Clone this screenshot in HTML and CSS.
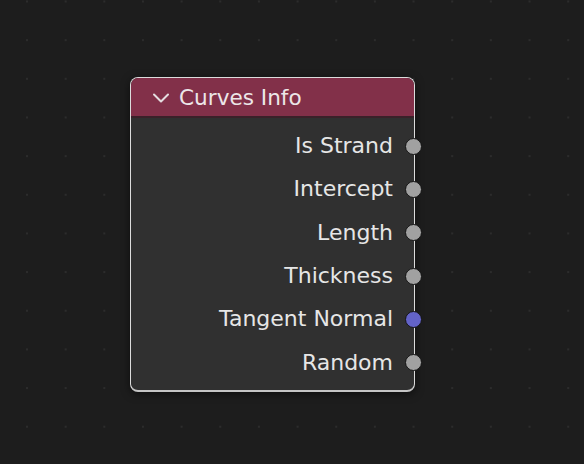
FILE: index.html
```html
<!DOCTYPE html>
<html>
<head>
<meta charset="utf-8">
<link rel="stylesheet" href="styles.css">
</head>
<body>
<div class="canvas">
  <div class="node">
    <div class="node-header">
      <svg class="chevron" width="18" height="12" viewBox="0 0 18 12"><polyline points="2,2.5 9,9.5 16,2.5" fill="none" stroke="#e4dde0" stroke-width="2" stroke-linecap="round" stroke-linejoin="round"/></svg>
      <span class="title">Curves Info</span>
    </div>
    <div class="node-body">
      <div class="row"><span>Is Strand</span><i class="socket"></i></div>
      <div class="row"><span>Intercept</span><i class="socket"></i></div>
      <div class="row"><span>Length</span><i class="socket"></i></div>
      <div class="row"><span>Thickness</span><i class="socket"></i></div>
      <div class="row"><span>Tangent Normal</span><i class="socket vector"></i></div>
      <div class="row"><span>Random</span><i class="socket"></i></div>
    </div>
  </div>
</div>
</body>
</html>
```
FILE: styles.css
```css
html, body {
  margin: 0;
  padding: 0;
}
body {
  width: 584px;
  height: 464px;
  overflow: hidden;
  background: #1d1d1d;
  font-family: "DejaVu Sans", sans-serif;
}
.canvas {
  position: relative;
  width: 584px;
  height: 464px;
  background-color: #1d1d1d;
  background-image:
    linear-gradient(to bottom, transparent 2px, #1d1d1d 2px),
    linear-gradient(to right, #2c2c2c 2px, transparent 2px);
  background-size: 38.67px 38.67px;
  background-position: 26px 0.5px;
}
.node {
  position: absolute;
  left: 130px;
  top: 77px;
  width: 283px;
  border: 1px solid #dcdcdc;
  border-bottom: 2px solid #c4c4c4;
  border-radius: 8px;
  box-shadow: 0 2px 8px rgba(0, 0, 0, 0.55);
  background: #303030;
}
.node-header {
  height: 38px;
  display: flex;
  align-items: center;
  gap: 9px;
  padding-left: 21px;
  background: #823049;
  border-radius: 7px 7px 0 0;
  border-bottom: 2px solid #3a2129;
}
.chevron {
  display: block;
  margin-top: 1px;
}
.title {
  color: #ece6e8;
  font-size: 21.6px;
  line-height: 1;
  margin-top: 1px;
}
.node-body {
  padding: 6px 0 6px;
  border-radius: 0 0 7px 7px;
}
.row {
  position: relative;
  height: 43.3px;
  display: flex;
  align-items: center;
  justify-content: flex-end;
  padding-right: 21px;
  color: #e6e6e6;
  font-size: 22px;
}
.socket {
  position: absolute;
  box-sizing: border-box;
  right: -8px;
  top: 50%;
  width: 17px;
  height: 17px;
  margin-top: -8px;
  border-radius: 50%;
  background: #a1a1a1;
  border: 1.5px solid #151515;
}
.socket.vector {
  background: #6363c8;
}
```
